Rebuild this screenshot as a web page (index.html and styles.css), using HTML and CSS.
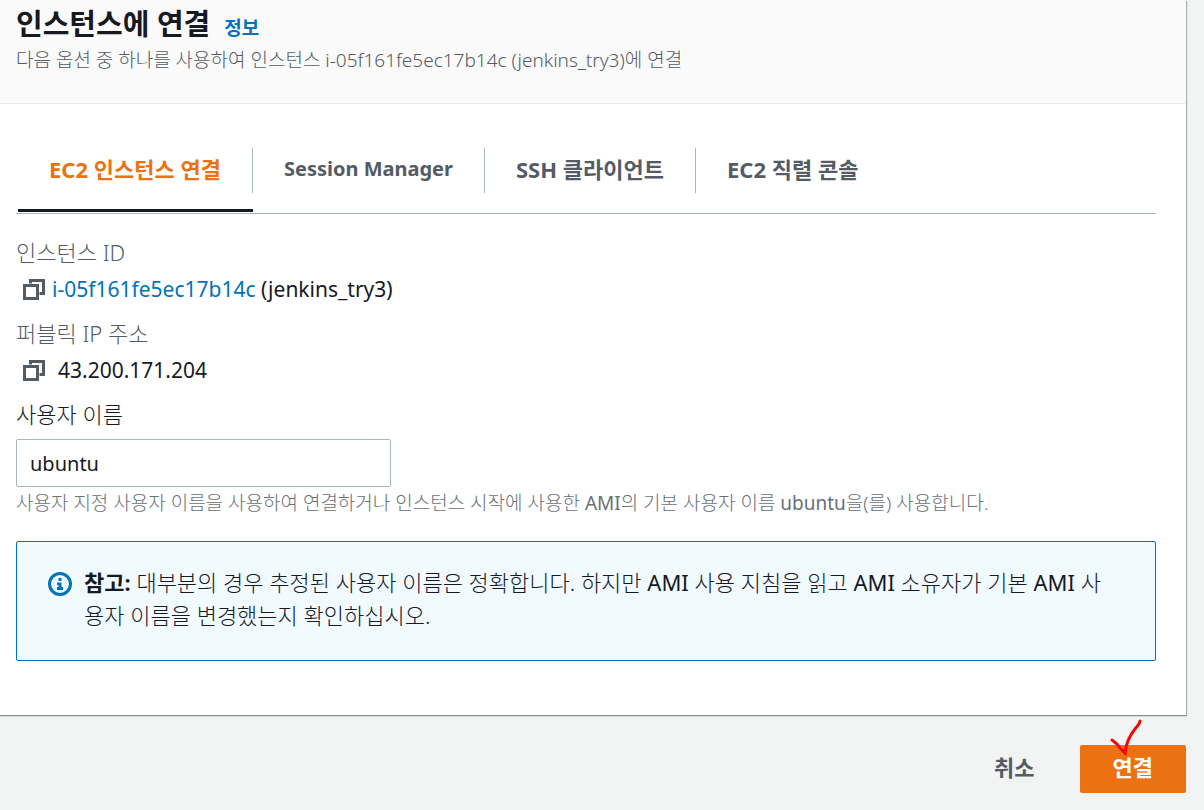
FILE: index.html
```html
<!DOCTYPE html>
<html lang="ko">
<head>
    <meta charset="UTF-8">
    <meta name="viewport" content="width=device-width, initial-scale=1.0">
    <title>인스턴스에 연결</title>
    <link rel="stylesheet" href="styles.css">
</head>
<body>
    <main class="panel">
        <header class="panel-header">
            <div class="title-row">
                <h1 class="title">인스턴스에 연결</h1>
                <a class="info" href="#">정보</a>
            </div>
            <p class="subtitle">다음 옵션 중 하나를 사용하여 인스턴스 i-05f161fe5ec17b14c (jenkins_try3)에 연결</p>
        </header>
        <div class="panel-body">
            <div class="tabs" role="tablist">
                <button class="tab active" type="button" role="tab" aria-selected="true"><span>EC2 인스턴스 연결</span></button>
                <button class="tab tab-small" type="button" role="tab" aria-selected="false"><span>Session Manager</span></button>
                <button class="tab" type="button" role="tab" aria-selected="false"><span>SSH 클라이언트</span></button>
                <button class="tab" type="button" role="tab" aria-selected="false"><span>EC2 직렬 콘솔</span></button>
            </div>
            <dl class="details">
                <dt>인스턴스 ID</dt>
                <dd>
                    <button class="copy" type="button" aria-label="인스턴스 ID 복사">
                        <svg width="24" height="24" viewBox="0 0 24 24"><path d="M8.500 6.500v-3h13v13h-4M2.500 8.500h13v13h-13z"/></svg>
                    </button>
                    <a href="#">i-05f161fe5ec17b14c</a>&nbsp;(jenkins_try3)
                </dd>
                <dt>퍼블릭 IP 주소</dt>
                <dd>
                    <button class="copy" type="button" aria-label="퍼블릭 IP 주소 복사">
                        <svg width="24" height="24" viewBox="0 0 24 24"><path d="M8.500 6.500v-3h13v13h-4M2.500 8.500h13v13h-13z"/></svg>
                    </button>
                    <span class="ip">43.200.171.204</span>
                </dd>
            </dl>
            <div class="field">
                <label for="username">사용자 이름</label>
                <input type="text" id="username" value="ubuntu">
                <p class="hint">사용자 지정 사용자 이름을 사용하여 연결하거나 인스턴스 시작에 사용한 <span class="latin">AMI</span>의 기본 사용자 이름 <span class="latin">ubuntu</span>을(를) 사용합니다.</p>
            </div>
            <div class="note">
                <svg class="note-icon" width="24" height="24" viewBox="0 0 24 24">
                    <circle cx="12" cy="12" r="10.500"/>
                    <path d="M10.500 6h3v3h-3zM9 10.500h4.500V15H15v3H9v-3h1.500v-2H9z"/>
                </svg>
                <p><strong>참고:</strong> 대부분의 경우 추정된 사용자 이름은 정확합니다. 하지만 <span class="latin">AMI</span> 사용 지침을 읽고 <span class="latin">AMI</span> 소유자가 기본 <span class="latin">AMI</span> 사용자 이름을 변경했는지 확인하십시오.</p>
            </div>
        </div>
    </main>
    <div class="actions">
        <button class="cancel" type="button">취소</button>
        <button class="connect" type="button">
            연결
            <svg class="check" width="34" height="38" viewBox="0 0 34 38"><path d="M3 21c3 2 6 5 8 8l5 5c1-9 5-18 10-24 3-4 5-5 5-8"/></svg>
        </button>
    </div>
</body>
</html>
```

FILE: styles.css
```css
* {
    margin: 0;
    padding: 0;
    box-sizing: border-box;
}
body {
    background: #f2f3f3;
    color: #16191f;
    font-family: "Noto Sans", "Noto Sans CJK KR", sans-serif;
    font-size: 22px;
    line-height: 32px;
}
button, input {
    font: inherit;
    color: inherit;
}
button {
    border: none;
    background: none;
    cursor: pointer;
}
a {
    color: #0073bb;
    text-decoration: none;
}
.latin {
    font-weight: normal;
}
.panel {
    margin-right: 18px;
    background: #fff;
    box-shadow: 0 1px 1px #879596, 1px 1px 1px #aab7b8;
}
.panel-header {
    padding: 4px 16px 27px;
    background: #fafafa;
    border-bottom: 1px solid #eaeded;
}
.title-row {
    display: flex;
    align-items: baseline;
    gap: 14px;
}
.title {
    font-size: 29px;
    line-height: 40px;
}
.info {
    font-size: 19px;
    font-weight: bold;
    line-height: 24px;
}
.subtitle {
    color: #545b64;
    font-size: 19px;
    font-weight: 300;
}
.panel-body {
    padding: 44px 30px 54px 16px;
}
.tabs {
    display: flex;
    padding-left: 2px;
    border-bottom: 1px solid #aab7b8;
}
.tab {
    display: flex;
    align-items: flex-start;
    height: 64px;
    margin-bottom: 1px;
    color: #545b64;
    font-weight: bold;
}
.tab span {
    padding: 5px 31px 8px;
    border-right: 1px solid #aab7b8;
}
.tab:last-child span {
    border-right: none;
}
.tab.active {
    color: #ec7211;
    border-bottom: 3px solid #16191f;
}
.tab.tab-small {
    font-size: 20px;
}
.details {
    padding-top: 22px;
}
.details dt {
    color: #545b64;
    font-weight: 300;
}
.details dd {
    display: flex;
    align-items: center;
    margin: 5px 0 12px;
    padding-left: 6px;
    font-size: 21px;
}
.copy {
    display: flex;
    margin-right: 6px;
}
.copy svg {
    fill: none;
    stroke: #545b64;
    stroke-width: 3;
}
.ip {
    padding-left: 6px;
}
.field label {
    display: block;
    font-weight: 300;
}
.field input {
    display: block;
    width: 375px;
    max-width: 100%;
    height: 48px;
    margin-top: 9px;
    padding: 0 13px;
    background: #fff;
    border: 1px solid #aab7b8;
    border-radius: 2px;
    font-size: 20px;
}
.hint {
    color: #687078;
    font-size: 19px;
    font-weight: 300;
}
.note {
    display: flex;
    gap: 12px;
    margin-top: 22px;
    padding: 24px 42px 28px 31px;
    background: #f1faff;
    border: 1px solid #0073bb;
    border-radius: 2px;
    line-height: 33px;
}
.note p {
    font-weight: 300;
    word-break: break-all;
}
.note strong {
    font-weight: bold;
}
.note-icon {
    flex: none;
    margin-top: 6px;
    fill: #0073bb;
}
.note-icon circle {
    fill: none;
    stroke: #0073bb;
    stroke-width: 3;
}
.actions {
    display: flex;
    justify-content: flex-end;
    gap: 12px;
    padding: 30px 18px 17px;
}
.actions button {
    height: 48px;
    padding: 0 33px 4px;
    font-weight: bold;
}
.cancel {
    color: #545b64;
}
.actions .connect {
    position: relative;
    background: #ec7211;
    color: #fff;
    border-radius: 2px;
}
.check {
    position: absolute;
    left: 29px;
    top: -26px;
    fill: none;
    stroke: #f00;
    stroke-width: 3;
    stroke-linecap: round;
}
```
